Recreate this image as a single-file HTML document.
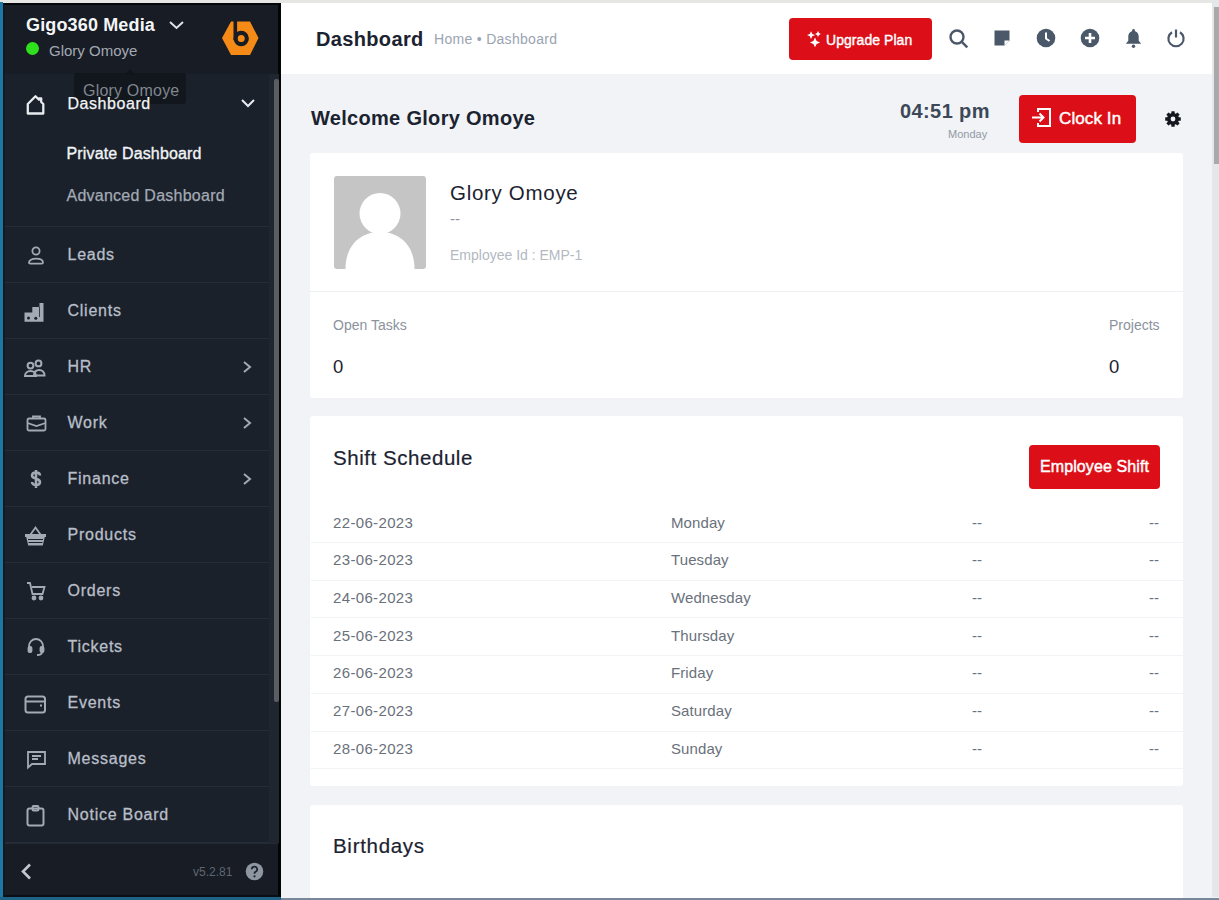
<!DOCTYPE html>
<html><head><meta charset="utf-8">
<style>
*{box-sizing:border-box;margin:0;padding:0}
html,body{width:1219px;height:900px;overflow:hidden}
body{position:relative;background:#f1f3f6;font-family:"Liberation Sans",sans-serif;color:#28313c}
.abs{position:absolute}
#topstrip{left:0;top:0;width:1219px;height:3px;background:#e6e6e4}
#lstrip{left:0;top:2px;width:3px;height:898px;background:#1b78a4}
#bstrip1{left:0;top:897px;width:281px;height:3px;background:#1e6285;z-index:5}
#bstrip2{left:281px;top:897.5px;width:938px;height:2.5px;background:#7a879b;z-index:5}
#sidebar{left:3px;top:3px;width:278px;height:894px;background:#1b212b;border-top:2px solid #05070a;border-right:3px solid #030406;border-bottom:2px solid #0b0e12;border-left:2px solid #141920;overflow:hidden}
#sbhead{left:0;top:0;width:273px;height:69px;background:#171c25}
#sbfoot{left:0;top:838px;width:273px;height:54px;background:#171c25;border-top:1px solid #232a35}
.mi{position:absolute;left:0;width:264px;height:56px;border-bottom:1px solid #262d38}
.mi .t{position:absolute;left:62.5px;top:18.5px;font-size:16px;color:#b8bec8;white-space:nowrap;letter-spacing:.75px;-webkit-text-stroke:.3px #b8bec8}
.mi svg.ic{position:absolute;left:20px;top:17px}
.mi .chev{position:absolute;left:236px;top:21px}
#header{left:281px;top:3px;width:932px;height:71px;background:#fff}
#vscroll{left:1212px;top:0;width:7px;height:897px;background:#e4e7ea}
#vthumb{left:1214px;top:7px;width:5px;height:157px;background:#a9a9aa}
.card{position:absolute;background:#fff;border-radius:3px}
.tr{font-size:15px;color:#6a717b;white-space:nowrap}
.btn{position:absolute;background:#dc0e17;border-radius:4px;color:#fff;white-space:nowrap}
</style></head>
<body>
<div id="topstrip" class="abs"></div>
<div id="lstrip" class="abs"></div>
<div id="bstrip1" class="abs"></div>
<div id="bstrip2" class="abs"></div>

<!-- SIDEBAR -->
<div id="sidebar" class="abs"></div>
<div class="abs" style="left:5px;top:5px;width:273px;height:69px;background:#171c25"></div>
<div class="abs" style="left:269px;top:74px;width:10px;height:769px;background:#20262f"></div>
<div class="abs" style="left:273.5px;top:79px;width:5.5px;height:623px;background:#5a5e63;border-radius:2px"></div>
<span class="abs" style="left:26px;top:15px;font-size:18px;font-weight:700;color:#f4f5f7;white-space:nowrap;letter-spacing:.15px">Gigo360 Media</span>
<svg class="abs" style="left:168px;top:19px" width="17" height="12" viewBox="0 0 17 12" fill="none" stroke="#dfe2e6" stroke-width="2"><path d="M2 3l6.5 6 6.5-6"/></svg>
<div class="abs" style="left:26px;top:42px;width:13px;height:13px;border-radius:50%;background:#2fe01c"></div>
<span class="abs" style="left:49px;top:42px;font-size:15px;color:#a3a9b3;white-space:nowrap">Glory Omoye</span>
<svg class="abs" style="left:215px;top:15px" width="50" height="45" viewBox="0 0 50 45"><path d="M16 6.5h19l8.5 16.5-8.5 17H16L7 23z" fill="#f58a16"/><rect x="18.5" y="4" width="3.6" height="21" fill="#171c25"/><circle cx="26.2" cy="23.5" r="5.6" fill="none" stroke="#171c25" stroke-width="4.2"/><circle cx="26.2" cy="23.5" r="3.1" fill="#f58a16"/></svg>
<!-- dashboard item -->
<div class="abs" style="left:74px;top:72.5px;width:112px;height:31.5px;background:rgba(16,20,27,.85);border-radius:3px"></div>
<span class="abs" style="left:83px;top:82px;font-size:16px;color:#80868f;white-space:nowrap;letter-spacing:.2px">Glory Omoye</span>
<svg class="abs" style="left:124px;top:69px" width="12" height="6" viewBox="0 0 12 6"><path d="M0 6L6 0l6 6z" fill="rgba(16,20,27,.85)"/></svg>
<svg class="abs" style="left:25px;top:93px" width="21" height="23" viewBox="0 0 21 23" fill="none" stroke="#e8ebef" stroke-width="2.3" stroke-linejoin="round"><path d="M2.8 20.5V11L10.5 3.3l3.5 3.5V5.3h2.2v3.7L18.3 11v9.5z"/></svg>
<span class="abs" style="left:67.5px;top:95px;font-size:16px;color:#f2f4f6;white-space:nowrap;letter-spacing:.55px;-webkit-text-stroke:.25px #f2f4f6">Dashboard</span>
<svg class="abs" style="left:239.5px;top:97px" width="16" height="12" viewBox="0 0 16 12" fill="none" stroke="#e8ebef" stroke-width="2"><path d="M2 3l6 6 6-6"/></svg>
<span class="abs" style="left:66.5px;top:144.5px;font-size:16px;color:#f2f4f6;white-space:nowrap;letter-spacing:.15px;-webkit-text-stroke:.35px #f2f4f6">Private Dashboard</span>
<span class="abs" style="left:66.5px;top:186.5px;font-size:16px;color:#a3aab4;white-space:nowrap;letter-spacing:.25px;-webkit-text-stroke:.25px #a3aab4">Advanced Dashboard</span>
<div class="abs" style="left:5px;top:226px;width:264px;height:1px;background:#262d38"></div>
<div class="abs" style="left:5px;top:0;width:0;height:0">
<div class="mi" style="top:227px"><svg class="ic" width="22" height="22" viewBox="0 0 22 22" fill="none" stroke="#a3aab4" stroke-width="1.8"><circle cx="11" cy="7" r="3.6"/><path d="M4 18.5c0-2.3 3-3.8 7-3.8s7 1.5 7 3.8c0 .8-.6 1.2-1.4 1.2H5.4C4.6 19.7 4 19.3 4 18.5z"/></svg><span class="t">Leads</span></div>
<div class="mi" style="top:283px"><svg class="ic" width="22" height="24" viewBox="0 0 22 24" style="left:19px" fill="#a3aab4"><path d="M0.5 12.5H8.3V7H15.5V3H19.5V21.8H0.5z"/><circle cx="4.5" cy="18" r="1.5" fill="#1b212b"/><circle cx="11.8" cy="18.3" r="1.5" fill="#1b212b"/><path d="M15.5 7v10" stroke="#1b212b" stroke-width=".8"/></svg><span class="t">Clients</span></div>
<div class="mi" style="top:339px"><svg class="ic" width="24" height="24" viewBox="0 0 24 24" style="left:19px" fill="none" stroke="#a3aab4" stroke-width="2"><circle cx="6.5" cy="9.6" r="2.9"/><circle cx="14.5" cy="7.4" r="2.9"/><path d="M1 20c0-3 2.3-5 5.5-5s5.5 2 5.5 5zM10 19.5c.3-3.3 2.3-5.5 5-5.5 3.3 0 5.5 2.2 5.5 5.5z"/></svg><span class="t">HR</span><svg class="chev" width="12" height="14" viewBox="0 0 12 14" fill="none" stroke="#a3aab4" stroke-width="2"><path d="M3 2l6 5-6 5"/></svg></div>
<div class="mi" style="top:395px"><svg class="ic" width="22" height="22" viewBox="0 0 22 22" fill="none" stroke="#a3aab4" stroke-width="1.8"><rect x="2.5" y="6.5" width="18" height="12" rx="1.5"/><path d="M8 6.5V4.5h7v2M2.5 11l9 3 9-3"/></svg><span class="t">Work</span><svg class="chev" width="12" height="14" viewBox="0 0 12 14" fill="none" stroke="#a3aab4" stroke-width="2"><path d="M3 2l6 5-6 5"/></svg></div>
<div class="mi" style="top:451px"><svg class="ic" width="22" height="22" viewBox="0 0 22 22" fill="none" stroke="#a3aab4" stroke-width="2.5"><path d="M15 7.5c0-1.8-1.8-3-4-3s-4 1.1-4 3 1.8 2.6 4 3.2 4 1.4 4 3.3-1.8 3-4 3-4-1.3-4-3M11 2v18"/></svg><span class="t">Finance</span><svg class="chev" width="12" height="14" viewBox="0 0 12 14" fill="none" stroke="#a3aab4" stroke-width="2"><path d="M3 2l6 5-6 5"/></svg></div>
<div class="mi" style="top:507px"><svg class="ic" width="24" height="24" viewBox="0 0 24 24" style="left:19px" fill="#a3aab4"><path d="M6.5 10.5l5-7 5 7" fill="none" stroke="#a3aab4" stroke-width="1.8"/><path d="M1 10h21v3h-1.2l-2 8.5H4.2l-2-8.5H1z"/><path d="M4 15.5h15M4.5 18.5h14" stroke="#1b212b" stroke-width="1.1"/></svg><span class="t">Products</span></div>
<div class="mi" style="top:563px"><svg class="ic" width="22" height="22" viewBox="0 0 22 22" fill="none" stroke="#a3aab4" stroke-width="1.8"><path d="M2 3h3l2.5 11h10L19.5 7H7"/><circle cx="9" cy="18" r="1.5" fill="#a3aab4"/><circle cx="16" cy="18" r="1.5" fill="#a3aab4"/></svg><span class="t">Orders</span></div>
<div class="mi" style="top:619px"><svg class="ic" width="22" height="22" viewBox="0 0 22 22" fill="none" stroke="#a3aab4" stroke-width="1.8"><path d="M4 13V10a7 7 0 0114 0v3"/><rect x="3.5" y="11" width="3" height="5" rx="1" fill="#a3aab4"/><rect x="15.5" y="11" width="3" height="5" rx="1" fill="#a3aab4"/><path d="M17 16c0 2-2 3-5 3"/></svg><span class="t">Tickets</span></div>
<div class="mi" style="top:675px"><svg class="ic" width="24" height="24" viewBox="0 0 24 24" style="left:19px" fill="none" stroke="#a3aab4" stroke-width="2"><rect x="1.5" y="4.5" width="19.5" height="16" rx="2.5"/><path d="M1.5 9.5h19.5"/><path d="M16 13.5h2" stroke-width="2.2"/></svg><span class="t">Events</span></div>
<div class="mi" style="top:731px"><svg class="ic" width="22" height="22" viewBox="0 0 22 22" fill="none" stroke="#a3aab4" stroke-width="1.8"><path d="M3 4h17v12H7l-4 3.5z"/><path d="M7 8h9M7 11h6"/></svg><span class="t">Messages</span></div>
<div class="mi" style="top:787px"><svg class="ic" width="22" height="24" viewBox="0 0 22 24" fill="none" stroke="#a3aab4" stroke-width="2"><rect x="2.5" y="4.5" width="16" height="17" rx="2"/><rect x="7.5" y="2" width="6" height="4.5" rx="1.2"/></svg><span class="t">Notice Board</span></div>
</div>
<div class="abs" style="left:5px;top:843px;width:273px;height:52px;background:#171c25;border-top:1px solid #232a35"></div>
<svg class="abs" style="left:19px;top:862px" width="14" height="19" viewBox="0 0 14 19" fill="none" stroke="#c3c8d0" stroke-width="2.6"><path d="M11 2.5L4 9.5l7 7"/></svg>
<span class="abs" style="left:193px;top:865px;font-size:12px;color:#5f6670;white-space:nowrap">v5.2.81</span>
<svg class="abs" style="left:245px;top:862px" width="19" height="19" viewBox="0 0 19 19"><circle cx="9.5" cy="9.5" r="8.8" fill="#8f969f"/><path d="M6.8 7.3a2.7 2.7 0 1 1 3.7 2.5c-.6.3-1 .7-1 1.4v.6" fill="none" stroke="#1b212b" stroke-width="1.8"/><circle cx="9.5" cy="14.3" r="1.1" fill="#1b212b"/></svg>


<!-- HEADER -->
<div id="header" class="abs"></div>
<span class="abs" style="left:316px;top:28px;font-size:20px;font-weight:700;color:#1b2230;white-space:nowrap;letter-spacing:.35px">Dashboard</span>
<span class="abs" style="left:434px;top:31px;font-size:14px;color:#9aa4b2;white-space:nowrap;letter-spacing:.3px">Home &bull; Dashboard</span>
<div class="btn" style="left:789px;top:18px;width:143px;height:42px"></div>
<svg class="abs" style="left:806px;top:30px" width="16" height="18" viewBox="0 0 16 18" fill="#fff"><path d="M5 1.2l1.3 2.8 2.8 1.1-2.8 1.2L5 9.1 3.8 6.3 1 5.1l2.8-1.1z"/><path d="M9 7.5l1.6 3.4 3.5 1.5-3.5 1.5L9 17.3l-1.6-3.4-3.5-1.5 3.5-1.5z"/><path d="M12 1l1 1.9 1.9 1-1.9 1L12 6.9 11 4.9 9.1 3.9l1.9-1z"/></svg>
<span class="abs" style="left:826px;top:31.5px;font-size:14px;color:#fff;white-space:nowrap;letter-spacing:.05px;-webkit-text-stroke:.4px #fff">Upgrade Plan</span>
<svg class="abs" style="left:948px;top:28px" width="22" height="22" viewBox="0 0 22 22" fill="none" stroke="#4a5869" stroke-width="2.4"><circle cx="9" cy="9" r="6.5"/><path d="M13.8 13.8l5.5 5.5"/></svg>
<svg class="abs" style="left:993px;top:29px" width="18" height="18" viewBox="0 0 18 18" fill="#4a5869"><path d="M1.5 1.5h15v10l-5 5h-10z"/><path d="M11.5 16.5v-5h5" fill="#fff"/></svg>
<svg class="abs" style="left:1036px;top:28px" width="20" height="20" viewBox="0 0 20 20"><circle cx="10" cy="10" r="9.3" fill="#4a5869"/><path d="M10 4.5V10.5l3.5 2.5" fill="none" stroke="#fff" stroke-width="2"/></svg>
<svg class="abs" style="left:1080px;top:28px" width="20" height="20" viewBox="0 0 20 20"><circle cx="10" cy="10" r="9.3" fill="#4a5869"/><path d="M10 5v10M5 10h10" fill="none" stroke="#fff" stroke-width="2.6"/></svg>
<svg class="abs" style="left:1124px;top:28px" width="19" height="21" viewBox="0 0 19 21" fill="#4a5869"><circle cx="9.5" cy="2.2" r="1.3"/><path d="M9.5 3c-3.3 0-5.2 2.6-5.2 5.8v3.9L1.8 15.8h15.4l-2.5-3.1V8.8C14.7 5.6 12.8 3 9.5 3z"/><circle cx="9.5" cy="18.3" r="1.7"/></svg>
<svg class="abs" style="left:1166px;top:28px" width="20" height="20" viewBox="0 0 20 20" fill="none" stroke="#4a5869" stroke-width="2.2"><path d="M6 4.2A7.6 7.6 0 1 0 14 4.2"/><path d="M10 1.5v8"/></svg>

<!-- MAIN -->
<span class="abs" style="left:311px;top:107px;font-size:20px;font-weight:700;color:#1b2230;white-space:nowrap;letter-spacing:.3px">Welcome Glory Omoye</span>
<span class="abs" style="left:900px;top:100px;font-size:20px;font-weight:700;color:#3c4858;white-space:nowrap;letter-spacing:.4px">04:51 pm</span>
<span class="abs" style="left:948px;top:128px;font-size:11px;color:#9199a4;white-space:nowrap">Monday</span>
<div class="btn" style="left:1019px;top:95px;width:117px;height:48px"></div>
<svg class="abs" style="left:1030px;top:106px" width="22" height="23" viewBox="0 0 22 23" fill="none" stroke="#fff" stroke-width="2"><path d="M8 6V3h12v17H8v-3"/><path d="M2 11.5h11M9.5 7.5l4 4-4 4"/></svg>
<span class="abs" style="left:1059px;top:109px;font-size:17px;color:#fff;white-space:nowrap;letter-spacing:.1px;-webkit-text-stroke:.45px #fff">Clock In</span>
<svg class="abs" style="left:1164px;top:110px" width="18" height="18" viewBox="0 0 18 18"><g fill="#15191f"><circle cx="9" cy="9" r="6"/><g id="teeth"><rect x="7.3" y="1.2" width="3.4" height="3.5" rx=".5"/><rect x="7.3" y="13.3" width="3.4" height="3.5" rx=".5"/><rect x="1.2" y="7.3" width="3.5" height="3.4" rx=".5"/><rect x="13.3" y="7.3" width="3.5" height="3.4" rx=".5"/></g><g transform="rotate(45 9 9)"><rect x="7.3" y="1.2" width="3.4" height="3.5" rx=".5"/><rect x="7.3" y="13.3" width="3.4" height="3.5" rx=".5"/><rect x="1.2" y="7.3" width="3.5" height="3.4" rx=".5"/><rect x="13.3" y="7.3" width="3.5" height="3.4" rx=".5"/></g></g><circle cx="9" cy="9" r="2.4" fill="#f1f3f6"/></svg>

<!-- CARD 1 -->
<div class="card" style="left:310px;top:153px;width:873px;height:245px"></div>
<div class="abs" style="left:310px;top:291px;width:873px;height:1px;background:#eef0f3"></div>
<svg class="abs" style="left:334px;top:176px" width="92" height="93" viewBox="0 0 92 93"><rect width="92" height="93" rx="3" fill="#c5c5c5"/><circle cx="46" cy="37.5" r="20.5" fill="#fff"/><path d="M11.5 93c0-24 15-37 34.5-37s34.5 13 34.5 37z" fill="#fff"/></svg>
<span class="abs" style="left:450px;top:181px;font-size:20.5px;color:#1b2230;white-space:nowrap;letter-spacing:.7px">Glory Omoye</span>
<span class="abs" style="left:450px;top:210px;font-size:15px;color:#8a929c;white-space:nowrap">--</span>
<span class="abs" style="left:450px;top:246.5px;font-size:14px;color:#b3b9c1;white-space:nowrap">Employee Id : EMP-1</span>
<span class="abs" style="left:333px;top:317px;font-size:14px;color:#8b929c;white-space:nowrap">Open Tasks</span>
<span class="abs" style="left:333px;top:355.5px;font-size:18.5px;color:#1b2230;white-space:nowrap">0</span>
<span class="abs" style="left:1109px;top:317px;font-size:14px;color:#8b929c;white-space:nowrap">Projects</span>
<span class="abs" style="left:1109px;top:355.5px;font-size:18.5px;color:#1b2230;white-space:nowrap">0</span>

<!-- CARD 2 -->
<div class="card" style="left:310px;top:416px;width:873px;height:370px"></div>
<span class="abs" style="left:333px;top:446px;font-size:20.5px;color:#1b2230;white-space:nowrap;letter-spacing:.55px;-webkit-text-stroke:.2px #1b2230">Shift Schedule</span>
<div class="btn" style="left:1029px;top:445px;width:131px;height:44px"></div>
<span class="abs" style="left:1040px;top:458px;font-size:16px;color:#fff;white-space:nowrap;letter-spacing:.1px;-webkit-text-stroke:.45px #fff">Employee Shift</span>
<div class="abs" style="left:311px;top:542.0px;width:872px;height:1px;background:#f2f3f6"></div>
<span class="abs tr" style="left:333px;top:513.5px;letter-spacing:.35px">22-06-2023</span>
<span class="abs tr" style="left:671px;top:513.5px;letter-spacing:.1px">Monday</span>
<span class="abs tr" style="left:972px;top:513.5px">--</span>
<span class="abs tr" style="left:1149px;top:513.5px">--</span>
<div class="abs" style="left:311px;top:579.7px;width:872px;height:1px;background:#f2f3f6"></div>
<span class="abs tr" style="left:333px;top:551.2px;letter-spacing:.35px">23-06-2023</span>
<span class="abs tr" style="left:671px;top:551.2px;letter-spacing:.1px">Tuesday</span>
<span class="abs tr" style="left:972px;top:551.2px">--</span>
<span class="abs tr" style="left:1149px;top:551.2px">--</span>
<div class="abs" style="left:311px;top:617.4px;width:872px;height:1px;background:#f2f3f6"></div>
<span class="abs tr" style="left:333px;top:588.9px;letter-spacing:.35px">24-06-2023</span>
<span class="abs tr" style="left:671px;top:588.9px;letter-spacing:.1px">Wednesday</span>
<span class="abs tr" style="left:972px;top:588.9px">--</span>
<span class="abs tr" style="left:1149px;top:588.9px">--</span>
<div class="abs" style="left:311px;top:655.1px;width:872px;height:1px;background:#f2f3f6"></div>
<span class="abs tr" style="left:333px;top:626.6px;letter-spacing:.35px">25-06-2023</span>
<span class="abs tr" style="left:671px;top:626.6px;letter-spacing:.1px">Thursday</span>
<span class="abs tr" style="left:972px;top:626.6px">--</span>
<span class="abs tr" style="left:1149px;top:626.6px">--</span>
<div class="abs" style="left:311px;top:692.8px;width:872px;height:1px;background:#f2f3f6"></div>
<span class="abs tr" style="left:333px;top:664.3px;letter-spacing:.35px">26-06-2023</span>
<span class="abs tr" style="left:671px;top:664.3px;letter-spacing:.1px">Friday</span>
<span class="abs tr" style="left:972px;top:664.3px">--</span>
<span class="abs tr" style="left:1149px;top:664.3px">--</span>
<div class="abs" style="left:311px;top:730.5px;width:872px;height:1px;background:#f2f3f6"></div>
<span class="abs tr" style="left:333px;top:702.0px;letter-spacing:.35px">27-06-2023</span>
<span class="abs tr" style="left:671px;top:702.0px;letter-spacing:.1px">Saturday</span>
<span class="abs tr" style="left:972px;top:702.0px">--</span>
<span class="abs tr" style="left:1149px;top:702.0px">--</span>
<div class="abs" style="left:311px;top:768.2px;width:872px;height:1px;background:#f2f3f6"></div>
<span class="abs tr" style="left:333px;top:739.7px;letter-spacing:.35px">28-06-2023</span>
<span class="abs tr" style="left:671px;top:739.7px;letter-spacing:.1px">Sunday</span>
<span class="abs tr" style="left:972px;top:739.7px">--</span>
<span class="abs tr" style="left:1149px;top:739.7px">--</span>

<!-- CARD 3 -->
<div class="card" style="left:310px;top:805px;width:873px;height:120px"></div>
<span class="abs" style="left:333px;top:834px;font-size:20.5px;color:#1b2230;white-space:nowrap;letter-spacing:.7px;-webkit-text-stroke:.2px #1b2230">Birthdays</span>


<div id="vscroll" class="abs"></div>
<div id="vthumb" class="abs"></div>
</body></html>
